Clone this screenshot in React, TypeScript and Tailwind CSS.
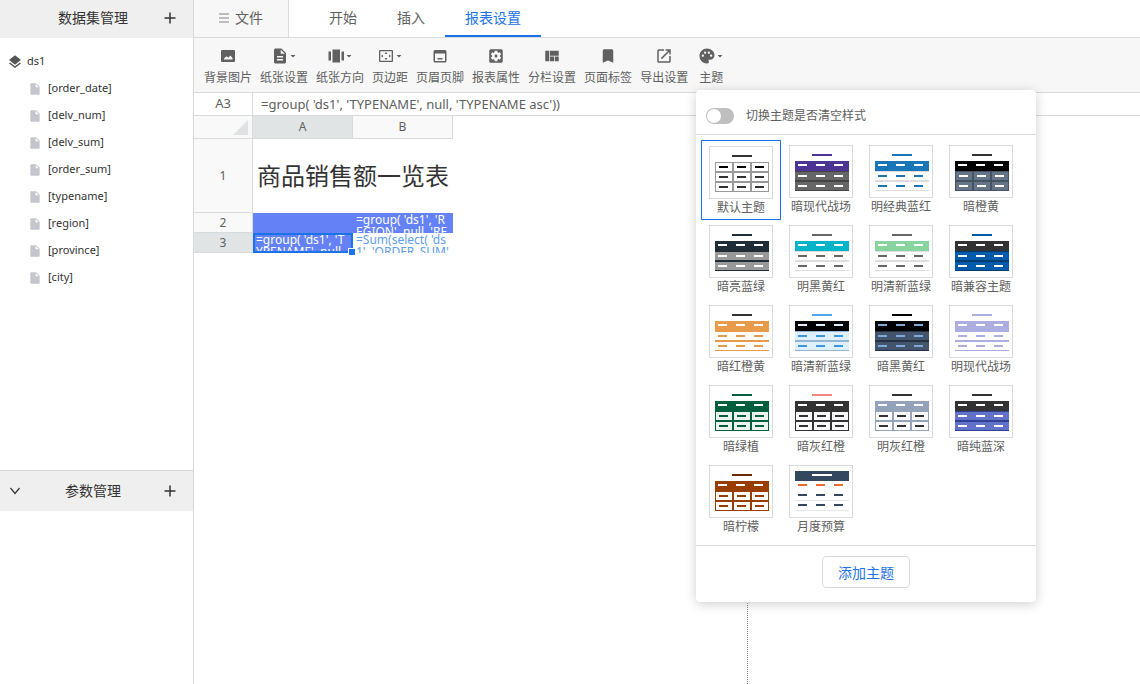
import React, { useState } from "react";
import {
  MdBookmark,
  MdDescription,
  MdInsertDriveFile,
  MdLaunch,
  MdLayers,
  MdPalette,
  MdSettingsApplications,
  MdViewQuilt,
} from "react-icons/md";

const FIELDS = [
  "[order_date]",
  "[delv_num]",
  "[delv_sum]",
  "[order_sum]",
  "[typename]",
  "[region]",
  "[province]",
  "[city]",
];

interface Theme {
  name: string;
  kind: "grid" | "stripe" | "budget";
  title: string;
  head: string;
  headDash: string;
  body: string;
  line: string;
  dash: string;
}

const theme = (
  name: string,
  kind: Theme["kind"],
  title: string,
  head: string,
  headDash: string,
  body: string,
  line: string,
  dash: string
): Theme => ({ name, kind, title, head, headDash, body, line, dash });

const THEMES: Theme[] = [
  theme("默认主题", "grid", "#333", "", "#000", "#fff", "#999", "#333"),
  theme("暗现代战场", "stripe", "#4b3493", "#4b3493", "#fff", "#666", "#444", "#fff"),
  theme("明经典蓝红", "stripe", "#1976b8", "#1976b8", "#fff", "#fff", "#ddd", "#1976b8"),
  theme("暗橙黄", "grid", "#333", "#000", "#fff", "#657587", "#435363", "#fff"),
  theme("暗亮蓝绿", "stripe", "#202c36", "#202c36", "#fff", "#999", "#202c36", "#fff"),
  theme("明黑黄红", "stripe", "#666", "#03b3c8", "#fff", "#fff", "#ddd", "#666"),
  theme("明清新蓝绿", "stripe", "#666", "#87d4a1", "#fff", "#fff", "#ddd", "#666"),
  theme("暗兼容主题", "stripe", "#005bac", "#333", "#fff", "#005bac", "#003b70", "#fff"),
  theme("暗红橙黄", "stripe", "#333", "#e89b4b", "#fff", "#fff", "#e89b4b", "#e89b4b"),
  theme("暗清新蓝绿", "stripe", "#51a5ea", "#000", "#deeffe", "#deeffe", "#94b4d2", "#3c96e0"),
  theme("暗黑黄红", "stripe", "#000", "#000", "#7eaadb", "#44546c", "#243145", "#7eaadb"),
  theme("明现代战场", "stripe", "#adaee0", "#adaee0", "#fff", "#fff", "#adaee0", "#adaee0"),
  theme("暗绿植", "grid", "#03603e", "#03603e", "#fff", "#eef3f0", "#03603e", "#03603e"),
  theme("暗灰红橙", "grid", "#f5867d", "#333", "#fff", "#fafafc", "#333", "#333"),
  theme("明灰红橙", "grid", "#333", "#94a3ba", "#fff", "#fafafc", "#94a3ba", "#333"),
  theme("暗纯蓝深", "stripe", "#333", "#333", "#fff", "#6272c8", "#2e3f94", "#fff"),
  theme("暗柠檬", "grid", "#662900", "#993d00", "#fff", "#fff", "#993d00", "#993d00"),
  theme("月度预算", "budget", "#fff", "#33475f", "#ee6a2c", "#fff", "#e6e6e6", "#33475f"),
];

const COLS = [0, 1, 2];

const ThemePreview: React.FC<{ theme: Theme }> = ({ theme: t }) => {
  const grid = t.kind === "grid";
  const budget = t.kind === "budget";
  const rowDash = budget ? 29 : 30;
  return (
    <svg viewBox="1 1 62 51" className="w-full h-full" shapeRendering="crispEdges">
      {t.head && <rect x="6" y={budget ? 6 : 16} width="54" height="10" fill={t.head} />}
      <rect x="23" y="9" width="20" height="2" fill={t.title} />
      {!t.head &&
        COLS.map((c) => (
          <rect key={c} x={6.5 + c * 18} y="16.5" width="17" height="9" fill="#fff" stroke={t.line} />
        ))}
      {COLS.map((c) => (
        <rect
          key={c}
          x={(t.head ? 9 : 10) + c * 18}
          y={t.head ? 19 : 20}
          width="9"
          height="2"
          fill={t.headDash}
        />
      ))}
      {[0, 10].map((dy) => (
        <g key={dy}>
          {grid ? (
            COLS.map((c) => (
              <rect
                key={c}
                x={6.5 + c * 18}
                y={26.5 + dy}
                width="17"
                height="9"
                fill={t.body}
                stroke={t.line}
              />
            ))
          ) : (
            <>
              <rect x="6" y={26 + dy} width="54" height="10" fill={t.body} />
              {!budget && <rect x="6" y={26 + dy} width="54" height="1" fill={t.line} />}
              <rect x="6" y={35 + dy} width="54" height="1" fill={t.line} />
            </>
          )}
          {COLS.map((c) => (
            <rect
              key={c}
              x={(grid ? 10 : 9) + c * 18}
              y={rowDash + dy}
              width="9"
              height="2"
              fill={t.dash}
            />
          ))}
        </g>
      ))}
    </svg>
  );
};

const PictureIcon = () => (
  <svg viewBox="0 0 18 18" className="w-[18px] h-[18px]" fill="currentColor">
    <path
      fillRule="evenodd"
      d="M3 3h12a1 1 0 0 1 1 1v10a1 1 0 0 1-1 1H3a1 1 0 0 1-1-1V4a1 1 0 0 1 1-1zm2 9.500h8.500v-1.500l-2.200-2.500-2 2.300-1.800-1.600-2.500 2.300z"
    />
  </svg>
);

const DirectionIcon = () => (
  <svg viewBox="0 0 18 18" className="w-[18px] h-[18px]" fill="currentColor">
    <path d="M5.500 2.500h7.500v13H5.500zM1.500 4.500h2.500v9H1.500zM14.500 4.500H17v9h-2.500z" />
  </svg>
);

const MarginIcon = () => (
  <svg viewBox="0 0 18 18" className="w-[18px] h-[18px]" fill="currentColor">
    <path
      fillRule="evenodd"
      d="M3 3h12a1 1 0 0 1 1 1v10a1 1 0 0 1-1 1H3a1 1 0 0 1-1-1V4a1 1 0 0 1 1-1zm.3 1.300v9.400h11.400V4.300z"
    />
    <path d="M9 5l1.500 2h-3zM9 13l1.500-2h-3zM4 9l2-1.500v3zM14 9l-2-1.500v3z" />
  </svg>
);

const HeaderFooterIcon = () => (
  <svg viewBox="0 0 18 18" className="w-[18px] h-[18px]" fill="currentColor">
    <path
      fillRule="evenodd"
      d="M4 3h10a1.500 1.500 0 0 1 1.500 1.500v9.500a1.500 1.500 0 0 1-1.500 1.500H4A1.500 1.500 0 0 1 2.500 14V4.500A1.500 1.500 0 0 1 4 3zm0 3.500V14h10V6.500z"
    />
    <path d="M6.500 11h5v1.500h-5z" />
  </svg>
);

const Caret = () => (
  <svg viewBox="0 0 8 8" className="w-2 h-2" fill="currentColor">
    <path d="M1.500 3h5L4 5.500z" />
  </svg>
);

const PlusIcon = () => (
  <svg viewBox="0 0 12 12" className="w-3 h-3" stroke="currentColor" strokeWidth="1.500">
    <path d="M6 0.500v11M0.500 6h11" />
  </svg>
);

const TOOLS = [
  { label: "背景图片", icon: <PictureIcon /> },
  { label: "纸张设置", icon: <MdDescription size={18} />, menu: true },
  { label: "纸张方向", icon: <DirectionIcon />, menu: true },
  { label: "页边距", icon: <MarginIcon />, menu: true },
  { label: "页眉页脚", icon: <HeaderFooterIcon /> },
  { label: "报表属性", icon: <MdSettingsApplications size={18} /> },
  { label: "分栏设置", icon: <MdViewQuilt size={18} /> },
  { label: "页面标签", icon: <MdBookmark size={18} /> },
  { label: "导出设置", icon: <MdLaunch size={18} /> },
  { label: "主题", icon: <MdPalette size={18} />, menu: true },
];

const Sidebar = () => (
  <aside className="flex flex-col w-[194px] shrink-0 border-r border-[#d8dadc] text-[#333]">
    <div className="flex items-center h-[38px] shrink-0 bg-[#efefef] pr-[17px] pb-[2px]">
      <h2 className="flex-1 pl-[22px] text-center text-sm">数据集管理</h2>
      <button aria-label="添加数据集">
        <PlusIcon />
      </button>
    </div>
    <div className="flex-[5] min-h-0 overflow-hidden">
      <div className="flex items-center h-[27px] mt-[10px] pl-[7px] gap-1 text-[11px]">
        <MdLayers size={16} className="text-[#555]" />
        <span>ds1</span>
      </div>
      <ul className="text-[11px]">
        {FIELDS.map((field) => (
          <li key={field} className="flex items-center h-[27px] pl-7 gap-[6px]">
            <MdInsertDriveFile size={14} className="text-[#c3c6cd]" />
            <span>{field}</span>
          </li>
        ))}
      </ul>
    </div>
    <div className="flex items-center h-[41px] shrink-0 bg-[#efefef] border-t border-[#d8dadc] pl-[10px] pr-[17px]">
      <button aria-label="收起参数">
        <svg viewBox="0 0 10 10" className="w-[10px] h-[10px]" fill="none" stroke="currentColor" strokeWidth="1.200">
          <path d="M0.500 2L5 7.500L9.500 2" />
        </svg>
      </button>
      <h2 className="flex-1 pl-[2px] text-center text-sm">参数管理</h2>
      <button aria-label="添加参数">
        <PlusIcon />
      </button>
    </div>
    <div className="flex-[2]" />
  </aside>
);

const Tabs = () => (
  <nav className="flex h-[38px] shrink-0 border-b border-[#d8dadc] text-sm text-[#606060]">
    <button className="flex items-center justify-center gap-[6px] w-[95px] mr-5 pb-[2px] bg-[#f7f7f7] border-r border-[#d8dadc]">
      <svg viewBox="0 0 10 10" className="w-[10px] h-[10px]" stroke="#aaa" strokeWidth="1.500">
        <path d="M0 1h10M0 5h10M0 9h10" />
      </svg>
      文件
    </button>
    <button className="px-5 pb-[2px]">开始</button>
    <button className="px-5 pb-[2px]">插入</button>
    <button className="px-5 border-b-2 border-[#1a73e8] text-[#1a73e8]">报表设置</button>
  </nav>
);

const Toolbar = () => (
  <div className="flex h-[55px] shrink-0 pl-[6px] bg-[#f7f7f7] border-b border-[#d8dadc] text-xs text-[#606060]">
    {TOOLS.map((tool) => (
      <button key={tool.label} className="flex flex-col items-center min-w-[38px] px-1 pt-[9px] gap-[5px]">
        <span className="flex items-center">
          {tool.icon}
          {tool.menu && <Caret />}
        </span>
        <span className="leading-4">{tool.label}</span>
      </button>
    ))}
  </div>
);

// long formulas break anywhere and are clipped by the row height
const CELL_TEXT = "h-5 overflow-hidden [line-break:anywhere] px-[3px] pt-px leading-3 text-xs";

const Sheet = () => (
  <table className="table-fixed w-[259px] border-separate border-spacing-0 text-xs text-[#606060]">
    <thead>
      <tr className="h-[23px]">
        <th className="w-[59px] p-0 bg-[#f9f9f9] border-r border-b border-[#d8dadc]">
          <svg viewBox="0 0 15 15" className="w-[15px] h-[15px] ml-auto mr-1" fill="#e0e2e2">
            <path d="M15 0v15H0z" />
          </svg>
        </th>
        <th className="w-[100px] p-0 font-normal bg-[#e1e4e4] border-r border-b border-[#d8dadc]">A</th>
        <th className="w-[100px] p-0 font-normal bg-[#f9f9f9] border-r border-b border-[#d8dadc]">B</th>
      </tr>
    </thead>
    <tbody>
      <tr className="h-[74px]">
        <th className="p-0 font-normal bg-[#f9f9f9] border-r border-b border-[#d8dadc]">1</th>
        <td colSpan={2} className="p-0 pl-1 text-2xl text-[#333] whitespace-nowrap">
          商品销售额一览表
        </td>
      </tr>
      <tr className="h-5">
        <th className="p-0 font-normal bg-[#f9f9f9] border-r border-b border-[#d8dadc]">2</th>
        <td className="p-0 bg-[#6482f6]" />
        <td className="p-0 bg-[#6482f6] text-white">
          <div className={CELL_TEXT}>=group( 'ds1', 'REGION', null, 'REGION asc')</div>
        </td>
      </tr>
      <tr className="h-5">
        <th className="p-0 font-normal bg-[#e1e4e4] border-r border-b border-[#d8dadc]">3</th>
        <td className="relative p-0 bg-[#6482f6] text-white">
          <div className={CELL_TEXT}>=group( 'ds1', 'TYPENAME', null, 'TYPENAME asc'))</div>
          <div className="absolute inset-0 border-2 border-[#1a73e8]" />
          <div className="absolute -right-[3px] -bottom-[3px] z-10 w-2 h-2 bg-[#1a73e8] border border-white" />
        </td>
        <td className="p-0 text-[#609ee9]">
          <div className={CELL_TEXT}>=Sum(select( 'ds1', 'ORDER_SUM'))</div>
        </td>
      </tr>
    </tbody>
  </table>
);

const ThemePanel = () => {
  const [selected, setSelected] = useState("默认主题");
  return (
    <section className="absolute left-[502px] top-[90px] z-20 w-[340px] bg-white rounded shadow-[0_2px_12px_rgba(0,0,0,0.2)] text-xs text-[#606060]">
      <div className="flex items-center h-[45px] pt-[7px] pl-[10px] gap-3 border-b border-[#d8dadc]">
        <input
          id="clear-style"
          type="checkbox"
          role="switch"
          className="appearance-none w-7 h-4 rounded-full bg-[#bfbfbf] checked:bg-[#1a73e8] before:block before:w-[14px] before:h-[14px] before:m-px before:rounded-full before:bg-white checked:before:ml-[13px]"
        />
        <label htmlFor="clear-style">切换主题是否清空样式</label>
      </div>
      <div className="flex flex-wrap p-[5px] border-b border-[#d8dadc]">
        {THEMES.map((t) => (
          <button
            key={t.name}
            onClick={() => setSelected(t.name)}
            className={`flex flex-col items-center gap-px w-20 h-20 pt-[5px] ${
              selected === t.name ? "border border-[#1a73e8]" : ""
            }`}
          >
            <span className="w-16 h-[53px] shrink-0 border border-[#d8dadc]">
              <ThemePreview theme={t} />
            </span>
            <span className="leading-4 whitespace-nowrap">{t.name}</span>
          </button>
        ))}
      </div>
      <div className="flex justify-center pt-[10px] pb-[14px]">
        <button className="h-8 px-[15px] pt-px rounded border border-[#d8dadc] text-sm text-[#1a73e8]">
          添加主题
        </button>
      </div>
    </section>
  );
};

const App: React.FC = () => {
  return (
    <div className="flex h-screen overflow-hidden bg-white font-['Noto_Sans','Noto_Sans_CJK_SC',sans-serif]">
      <Sidebar />
      <main className="relative flex flex-col flex-1 min-w-0">
        <Tabs />
        <Toolbar />
        <div className="flex h-[23px] shrink-0 border-b border-[#d8dadc] text-[13px] text-[#606060]">
          <input
            aria-label="单元格"
            defaultValue="A3"
            className="w-[59px] text-center border-r border-[#d8dadc] outline-none"
          />
          <input
            aria-label="公式"
            defaultValue="=group( 'ds1', 'TYPENAME', null, 'TYPENAME asc'))"
            className="flex-1 px-2 pt-[2px] outline-none"
          />
        </div>
        <div className="flex-1 w-[554px] border-r border-dotted border-[#888]">
          <Sheet />
        </div>
        <ThemePanel />
      </main>
    </div>
  );
};

export default App;
